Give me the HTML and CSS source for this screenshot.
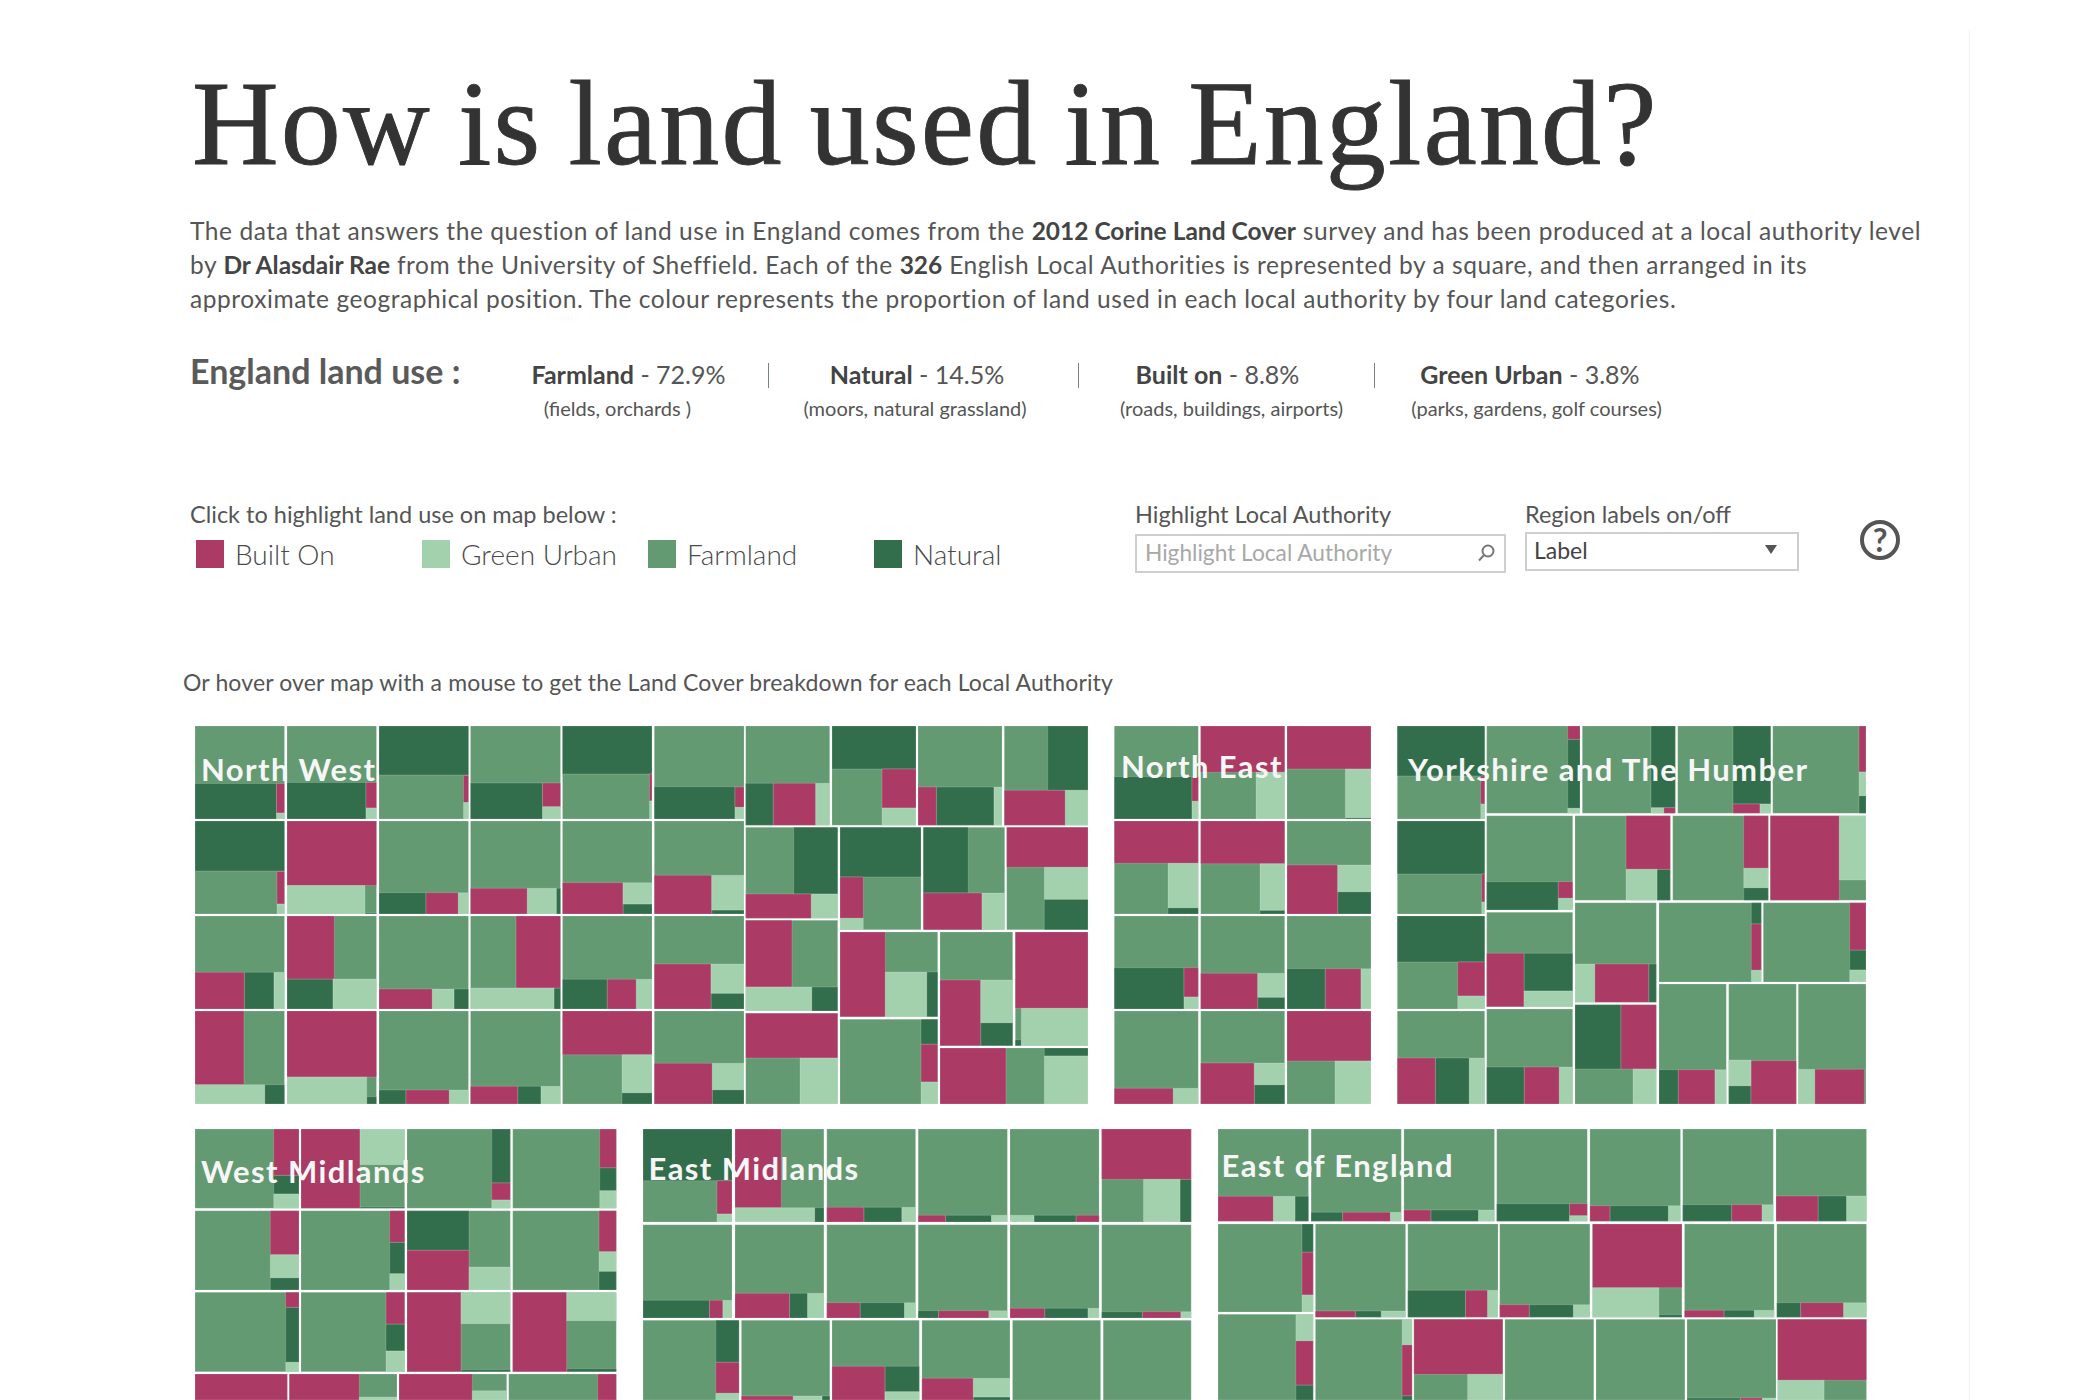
FILE: index.html
```html
<!DOCTYPE html>
<html lang="en">
<head>
<meta charset="utf-8">
<title>How is land used in England?</title>
<link rel="stylesheet" href="styles.css">
</head>
<body>
<main class="frame">
  <h1 class="title">How is land used in England?</h1>
  <p class="intro">The data that answers the question of land use in England comes from the <b>2012 Corine Land Cover</b> survey and has been produced at a local authority level<br>by <b>Dr Alasdair Rae</b> from the University of Sheffield. Each of the <b>326</b> English Local Authorities is represented by a square, and then arranged in its<br>approximate geographical position. The colour represents the proportion of land used in each local authority by four land categories.</p>

  <section class="stats">
    <h2 class="stats-head">England land use :</h2>
    <div class="stat stat-farm"><div class="stat-main"><b>Farmland</b> - 72.9%</div><div class="stat-sub">(fields, orchards )</div></div>
    <span class="rule rule-a"></span>
    <div class="stat stat-nat"><div class="stat-main"><b>Natural</b> - 14.5%</div><div class="stat-sub">(moors, natural grassland)</div></div>
    <span class="rule rule-b"></span>
    <div class="stat stat-built"><div class="stat-main"><b>Built on</b> - 8.8%</div><div class="stat-sub">(roads, buildings, airports)</div></div>
    <span class="rule rule-c"></span>
    <div class="stat stat-green"><div class="stat-main"><b>Green Urban</b> - 3.8%</div><div class="stat-sub">(parks, gardens, golf courses)</div></div>
  </section>

  <section class="controls">
    <div class="legend-col">
      <div class="ctl-label">Click to highlight land use on map below :</div>
      <div class="legend">
        <div class="legend-item"><span class="swatch sw-built"></span>Built On</div>
        <div class="legend-item"><span class="swatch sw-light"></span>Green Urban</div>
        <div class="legend-item"><span class="swatch sw-farm"></span>Farmland</div>
        <div class="legend-item"><span class="swatch sw-nat"></span>Natural</div>
      </div>
    </div>
    <div class="search-col">
      <div class="ctl-label">Highlight Local Authority</div>
      <div class="search-box">
        <span class="placeholder">Highlight Local Authority</span>
        <svg class="search-icon" viewBox="0 0 18 18" width="18" height="18"><circle cx="11" cy="7" r="5.5"/><path d="M7 11 2 16.5"/></svg>
      </div>
    </div>
    <div class="select-col">
      <div class="ctl-label">Region labels on/off</div>
      <div class="select-box"><span>Label</span><span class="caret"></span></div>
    </div>
    <svg class="help" viewBox="0 0 40 40" width="40" height="40"><circle cx="20" cy="20" r="18"/><text x="20" y="31.5" text-anchor="middle">?</text></svg>
  </section>

  <p class="hover-note">Or hover over map with a mouse to get the Land Cover breakdown for each Local Authority</p>

  <div class="map-row map-row-1">
    <div class="region">
      <svg class="treemap" viewBox="195 726 893 378" width="893" height="378">
        <path class="farm" d="M195 726H284.5V819H195zM287 726H376.5V819H287zM379 726H468.5V819H379zM470.5 726H560.5V819H470.5zM562.5 726H652V819H562.5zM654.3 726H744V819H654.3zM195 821H284.5V914H195zM287 821H376.5V914H287zM379 821H468.5V914H379zM470.5 821H560.5V914H470.5zM562.5 821H652V914H562.5zM654.3 821H744V914H654.3zM195 916H284.5V1009H195zM287 916H376.5V1009H287zM379 916H468.5V1009H379zM470.5 916H560.5V1009H470.5zM562.5 916H652V1009H562.5zM654.3 916H744V1009H654.3zM195 1011H284.5V1104H195zM287 1011H376.5V1104H287zM379 1011H468.5V1104H379zM470.5 1011H560.5V1104H470.5zM562.5 1011H652V1104H562.5zM654.3 1011H744V1104H654.3zM745.7 726H829.7V825.3H745.7zM832 726H916V825.3H832zM918 726H1002V825.3H918zM1004.3 726H1088V825.3H1004.3zM745.7 827.3H837.7V918.3H745.7zM840 827.3H921V929.7H840zM923.3 827.3H1004.7V929.7H923.3zM1006.7 827.3H1088V929.7H1006.7zM745.7 920.3H837.7V1011H745.7zM745.7 1013.3H837.7V1104H745.7zM840 932H937.7V1016.7H840zM840 1019.3H937.7V1104H840zM940 932H1012.7V1045.7H940zM1015.3 932H1088V1045.7H1015.3zM940 1048H1088V1104H940z"/>
        <path class="nat" d="M195 783.5H276.5V819H195zM287 782.5H366V819H287zM379 726H468.5V775H379zM470.5 783H542.5V819H470.5zM562.5 726H652V774H562.5zM654.3 786.7H735V819H654.3zM195 821H284.5V871H195zM365 913H376.5V914H365zM379 892.7H426V914H379zM556.3 888.3H560.5V914H556.3zM623 904H652V914H623zM711.7 910H744V914H711.7zM244.3 972.3H274V1009H244.3zM287 979H333V1009H287zM454 989H468.5V1009H454zM554 988H560.5V1009H554zM562.5 979.3H607.3V1009H562.5zM711 993.3H744V1009H711zM264.7 1084.7H284.5V1104H264.7zM366.7 1096.7H376.5V1104H366.7zM379 1090H406V1104H379zM517.7 1086.3H541V1104H517.7zM622 1092.7H652V1104H622zM712.3 1089.7H744V1104H712.3zM745.7 783.3H773.3V825.3H745.7zM832 726H916V769H832zM936.3 787H994V825.3H936.3zM1047.7 726H1088V790.3H1047.7zM793.7 827.3H837.7V894H793.7zM840 827.3H921V877H840zM923.3 827.3H968.3V893H923.3zM1044.3 899.3H1088V929.7H1044.3zM811.7 987H837.7V1011H811.7zM926.7 972H937.7V1016.7H926.7zM921 1019.3H937.7V1044.3H921zM980.7 1022.7H1012.7V1045.7H980.7zM1015.3 1039.7H1021.3V1045.7H1015.3zM1044.3 1048H1088V1056H1044.3z"/>
        <path class="built" d="M276.5 783.5H284.5V813H276.5zM366 782.5H376.5V808H366zM463.5 775.5H468.5V802.5H463.5zM542.5 783H560.5V806.7H542.5zM649.5 774H652V800.7H649.5zM735 787H744V807.3H735zM277 871.5H284.5V904H277zM287 821H376.5V885.5H287zM426 892.7H458.3V914H426zM470.5 888.3H527.3V914H470.5zM562.5 882.7H623V914H562.5zM654.3 875.3H711.7V914H654.3zM195 972.3H244.3V1009H195zM287 916H334.3V979H287zM379 989H432.3V1009H379zM516 916H560.5V988H516zM607.3 979.3H636.3V1009H607.3zM654.3 964H711V1009H654.3zM195 1011H244V1084.7H195zM287 1011H376.5V1077H287zM406 1090H449.3V1104H406zM470.5 1086.3H517.7V1104H470.5zM562.5 1011H652V1054.7H562.5zM654.3 1063.3H712.3V1104H654.3zM773.3 783.3H815.7V825.3H773.3zM882 769H916V808H882zM918 787H936.3V825.3H918zM1004.3 790.3H1065.3V825.3H1004.3zM745.7 894H811.3V918.3H745.7zM840 877H863.3V918.3H840zM923.3 893H982V929.7H923.3zM1006.7 827.3H1088V867.3H1006.7zM745.7 920.3H792V987H745.7zM745.7 1013.3H837.7V1058H745.7zM840 932H885.3V1016.7H840zM921 1044.3H937.7V1082H921zM940 980H980.7V1045.7H940zM1015.3 932H1088V1008.3H1015.3zM940 1048H1006V1104H940z"/>
        <path class="light" d="M276.5 813H284.5V819H276.5zM366 808H376.5V819H366zM463.5 802.5H468.5V819H463.5zM542.5 806.7H560.5V819H542.5zM649.5 801H652V819H649.5zM735 807.3H744V819H735zM277 904H284.5V914H277zM287 885.5H365V914H287zM458.3 892.7H468.5V914H458.3zM527.3 888.3H556.3V914H527.3zM623 882.7H652V904H623zM711.7 875.3H744V910H711.7zM274 972.3H284.5V1009H274zM333 979H376.5V1009H333zM432.3 989H454V1009H432.3zM470.5 988H554V1009H470.5zM636.3 979.3H652V1009H636.3zM711 964H744V993.3H711zM195 1084.7H264.7V1104H195zM287 1077H366.7V1104H287zM449.3 1090H468.5V1104H449.3zM541 1086.3H560.5V1104H541zM622 1054.7H652V1092.7H622zM712.3 1063.3H744V1089.7H712.3zM815.7 783.3H829.7V825.3H815.7zM882 808H916V825.3H882zM994 787H1002V825.3H994zM1065.3 790.3H1088V825.3H1065.3zM811.3 894H837.7V918.3H811.3zM840 918.3H863.3V929.7H840zM982 893H1004.7V929.7H982zM1044.3 867.3H1088V899.3H1044.3zM745.7 987H811.7V1011H745.7zM800 1058H837.7V1104H800zM885.3 972H926.7V1016.7H885.3zM921 1082H937.7V1104H921zM980.7 980H1012.7V1022.7H980.7zM1021.3 1008.3H1088V1045.7H1021.3zM1044.3 1056H1088V1104H1044.3z"/>
      </svg>
      <div class="region-label label-nw">North West</div>
    </div>
    <div class="region">
      <svg class="treemap" viewBox="1114 726 257 378" width="257" height="378">
        <path class="farm" d="M1114.3 726H1198.3V819H1114.3zM1200.7 726H1284.7V819H1200.7zM1287 726H1371V819H1287zM1114.3 821H1198.3V914H1114.3zM1200.7 821H1284.7V914H1200.7zM1287 821H1371V914H1287zM1114.3 916H1198.3V1009H1114.3zM1200.7 916H1284.7V1009H1200.7zM1287 916H1371V1009H1287zM1114.3 1011H1198.3V1104H1114.3zM1200.7 1011H1284.7V1104H1200.7zM1287 1011H1371V1104H1287z"/>
        <path class="nat" d="M1114.3 776.7H1192V819H1114.3zM1345.3 817.7H1371V819H1345.3zM1168 907.7H1198.3V914H1168zM1260 910.3H1284.7V914H1260zM1337.7 891.7H1371V914H1337.7zM1114.3 967.7H1184V1009H1114.3zM1257.7 997.3H1284.7V1009H1257.7zM1287 968.7H1325.3V1009H1287zM1254.3 1084.7H1284.7V1104H1254.3z"/>
        <path class="built" d="M1192 776.7H1198.3V801.3H1192zM1200.7 726H1284.7V772.3H1200.7zM1287 726H1371V769H1287zM1114.3 821H1198.3V863.3H1114.3zM1200.7 821H1284.7V863.7H1200.7zM1287 865H1337.7V914H1287zM1184 967.7H1198.3V997H1184zM1200.7 973.3H1257.7V1009H1200.7zM1325.3 968.7H1361V1009H1325.3zM1114.3 1088.3H1173.3V1104H1114.3zM1200.7 1063H1254.3V1104H1200.7zM1287 1011H1371V1061H1287z"/>
        <path class="light" d="M1192 801.3H1198.3V819H1192zM1256 772.3H1284.7V819H1256zM1345.3 769H1371V817.7H1345.3zM1168 863.3H1198.3V907.7H1168zM1260 863.7H1284.7V910.3H1260zM1337.7 865H1371V891.7H1337.7zM1184 997H1198.3V1009H1184zM1257.7 973.3H1284.7V997.3H1257.7zM1361 968.7H1371V1009H1361zM1173.3 1088.3H1198.3V1104H1173.3zM1254.3 1063H1284.7V1084.7H1254.3zM1335 1061H1371V1104H1335z"/>
      </svg>
      <div class="region-label label-ne">North East</div>
    </div>
    <div class="region">
      <svg class="treemap" viewBox="1397 726 469 378" width="469" height="378">
        <path class="farm" d="M1397.3 726H1484.7V819H1397.3zM1397.3 821H1484.7V914H1397.3zM1397.3 916H1484.7V1009H1397.3zM1397.3 1011H1484.7V1104H1397.3zM1486.7 726H1580V813.3H1486.7zM1582.3 726H1675.3V813.3H1582.3zM1677.7 726H1770.7V813.3H1677.7zM1772.7 726H1866V813.3H1772.7zM1486.7 815.7H1572.7V910H1486.7zM1486.7 912.3H1572.7V1006.7H1486.7zM1486.7 1009H1572.7V1104H1486.7zM1575 815.7H1670.3V900.3H1575zM1672.7 815.7H1768.3V900.3H1672.7zM1770.3 815.7H1866V900.3H1770.3zM1575 902.7H1656.3V1002.3H1575zM1575 1004.7H1656.3V1104H1575zM1659 902.7H1761.3V982H1659zM1763.3 902.7H1866V982H1763.3zM1659 984H1726.3V1104H1659zM1728.7 984H1796.3V1104H1728.7zM1798.3 984H1866V1104H1798.3z"/>
        <path class="nat" d="M1397.3 726H1484.7V776H1397.3zM1397.3 821H1484.7V874H1397.3zM1397.3 916H1484.7V962H1397.3zM1435.3 1058H1469.3V1104H1435.3zM1567.7 739.3H1580V808.3H1567.7zM1651 726H1675.3V807.7H1651zM1733 726H1770.7V804H1733zM1859 795.7H1866V813.3H1859zM1486.7 881.7H1558.3V910H1486.7zM1524 953.3H1572.7V991H1524zM1486.7 1067H1524.3V1104H1486.7zM1657 869.3H1670.3V900.3H1657zM1743.7 887.7H1768.3V900.3H1743.7zM1648.7 964H1656.3V1002.3H1648.7zM1575 1004.7H1621V1069H1575zM1751.3 902.7H1761.3V924H1751.3zM1849.7 950H1866V970H1849.7zM1659 1069.7H1678.3V1104H1659zM1728.7 1085.7H1751V1104H1728.7z"/>
        <path class="built" d="M1480.7 776H1484.7V804H1480.7zM1481.7 874H1484.7V902H1481.7zM1457.7 962H1484.7V996H1457.7zM1397.3 1058H1435.3V1104H1397.3zM1567.7 726H1580V739.3H1567.7zM1663.7 807.7H1675.3V813.3H1663.7zM1733 804H1760V813.3H1733zM1859 726H1866V772H1859zM1558.3 881.7H1572.7V898.3H1558.3zM1486.7 953.3H1524V1006.7H1486.7zM1524.3 1067H1559.3V1104H1524.3zM1626 815.7H1670.3V869.3H1626zM1743.7 815.7H1768.3V868.3H1743.7zM1770.3 815.7H1839.3V900.3H1770.3zM1594.7 964H1648.7V1002.3H1594.7zM1621 1004.7H1656.3V1069H1621zM1751.3 924H1761.3V970.3H1751.3zM1849.7 902.7H1866V950H1849.7zM1678.3 1069.7H1715V1104H1678.3zM1751 1060.7H1796.3V1104H1751zM1814.7 1069.3H1864.3V1104H1814.7z"/>
        <path class="light" d="M1480.7 804H1484.7V819H1480.7zM1481.7 902H1484.7V914H1481.7zM1457.7 996H1484.7V1009H1457.7zM1469.3 1058H1484.7V1104H1469.3zM1567.7 808.3H1580V813.3H1567.7zM1651 807.7H1663.7V813.3H1651zM1760 804H1770.7V813.3H1760zM1859 772H1866V795.7H1859zM1558.3 898.3H1572.7V910H1558.3zM1524 991H1572.7V1006.7H1524zM1559.3 1067H1572.7V1104H1559.3zM1626 869.3H1657V900.3H1626zM1743.7 868.3H1768.3V887.7H1743.7zM1839.3 815.7H1866V880H1839.3zM1575 964H1594.7V1002.3H1575zM1633 1069H1656.3V1104H1633zM1751.3 970.3H1761.3V982H1751.3zM1849.7 970H1866V982H1849.7zM1715 1069.7H1726.3V1104H1715zM1728.7 1060H1751V1085.7H1728.7zM1798.3 1069.3H1814.7V1104H1798.3z"/>
      </svg>
      <div class="region-label label-yh">Yorkshire and The Humber</div>
    </div>
  </div>

  <div class="map-row map-row-2">
    <div class="region">
      <svg class="treemap" viewBox="195 1129 421.5 271" width="421.5" height="271">
        <path class="farm" d="M195 1129H299V1208.3H195zM301 1129H404.7V1208.3H301zM407 1129H510.3V1208.3H407zM512.7 1129H616.3V1208.3H512.7zM195 1210.7H299V1290H195zM301 1210.7H404.7V1290H301zM407 1210.7H510.3V1290H407zM512.7 1210.7H616.3V1290H512.7zM195 1292.3H299V1371.7H195zM301 1292.3H404.7V1371.7H301zM407 1292.3H510.3V1371.7H407zM512.7 1292.3H616.3V1371.7H512.7zM195 1374H287.3V1400H195zM289.3 1374H397V1400H289.3zM399 1374H506.7V1400H399zM508.7 1374H616.3V1400H508.7z"/>
        <path class="nat" d="M273.7 1175.3H299V1194H273.7zM360 1207H404.7V1208.3H360zM491.7 1129H510.3V1183H491.7zM599.7 1167.7H616.3V1190.7H599.7zM270.3 1277.7H299V1290H270.3zM389.7 1242.3H404.7V1273.7H389.7zM407 1210.7H469V1250.3H407zM599 1271.3H616.3V1290H599zM285.7 1307.3H299V1362.3H285.7zM386 1324H404.7V1351H386zM461 1369.7H510.3V1371.7H461zM566.7 1368.7H616.3V1371.7H566.7z"/>
        <path class="built" d="M273.7 1129H299V1175.3H273.7zM301 1129H360V1208.3H301zM491.7 1183H510.3V1200H491.7zM599.7 1129H616.3V1167.7H599.7zM270.3 1210.7H299V1254.7H270.3zM389.7 1210.7H404.7V1242.3H389.7zM407 1250.3H469V1290H407zM599 1210.7H616.3V1251.7H599zM285.7 1292.3H299V1307.3H285.7zM386 1292.3H404.7V1324H386zM407 1292.3H461V1371.7H407zM512.7 1292.3H566.7V1371.7H512.7zM195 1374H287.3V1400H195zM289.3 1374H359.3V1400H289.3zM399 1374H472.3V1400H399zM597.7 1374H616.3V1400H597.7z"/>
        <path class="light" d="M273.7 1194H299V1208.3H273.7zM360 1129H404.7V1164.7H360zM491.7 1200H510.3V1208.3H491.7zM599.7 1190.7H616.3V1208.3H599.7zM270.3 1254.7H299V1277.7H270.3zM389.7 1273.7H404.7V1290H389.7zM469 1267H510.3V1290H469zM599 1251.7H616.3V1271.3H599zM285.7 1362.3H299V1371.7H285.7zM386 1351H404.7V1371.7H386zM461 1292.3H510.3V1323.7H461zM566.7 1292.3H616.3V1320.7H566.7zM359.3 1397H397V1400H359.3zM472.3 1390.7H506.7V1400H472.3z"/>
      </svg>
      <div class="region-label label-wm">West Midlands</div>
    </div>
    <div class="region">
      <svg class="treemap" viewBox="643 1129 548.5 271" width="548.5" height="271">
        <path class="farm" d="M643 1129H732V1222H643zM735 1129H823.9V1222H735zM826.8 1129H915.6V1222H826.8zM918.2 1129H1007.4V1222H918.2zM1010 1129H1099.1V1222H1010zM1101.7 1129H1191.2V1222H1101.7zM643 1224.7H732V1318H643zM735 1224.7H823.9V1318H735zM826.8 1224.7H915.6V1318H826.8zM918.2 1224.7H1007.4V1318H918.2zM1010 1224.7H1099.1V1318H1010zM1101.7 1224.7H1191.2V1318H1101.7zM643 1320.3H739.1V1400H643zM741.4 1320.3H829.8V1400H741.4zM832 1320.3H919.3V1400H832zM921.9 1320.3H1010V1400H921.9zM1012.5 1320.3H1100.6V1400H1012.5zM1103.2 1320.3H1191.2V1400H1103.2z"/>
        <path class="nat" d="M643 1129H732V1180.7H643zM814.6 1207.7H823.9V1222H814.6zM863.8 1207.3H901.9V1222H863.8zM945.6 1215.3H991.5V1222H945.6zM1034 1215.3H1076.2V1222H1034zM1180 1179.3H1191.2V1222H1180zM643 1300.3H709.5V1318H643zM789.5 1293.3H807.6V1318H789.5zM860.1 1302.7H904.5V1318H860.1zM918.2 1310.7H938.5V1318H918.2zM1044.7 1308.3H1088V1318H1044.7zM1101.7 1311.7H1142.4V1318H1101.7zM715.8 1320.3H739.1V1362.3H715.8zM822 1396H829.8V1400H822zM884.9 1366.3H919.3V1391.7H884.9zM973.3 1397H1010V1400H973.3z"/>
        <path class="built" d="M717 1180.7H732V1214H717zM735 1129H781.3V1207.7H735zM826.8 1207.3H863.8V1222H826.8zM918.2 1215.3H945.6V1222H918.2zM1076.2 1215.3H1099.1V1222H1076.2zM1101.7 1129H1191.2V1179.3H1101.7zM709.5 1300.3H722.9V1318H709.5zM735 1293.3H789.5V1318H735zM826.8 1302.7H860.1V1318H826.8zM938.5 1310.7H988.9V1318H938.5zM1010 1308.3H1044.7V1318H1010zM1142.4 1311.7H1180.9V1318H1142.4zM715.8 1362.3H739.1V1393.3H715.8zM741.4 1396H793.2V1400H741.4zM832 1366.3H884.9V1400H832zM921.9 1378.3H973.3V1400H921.9z"/>
        <path class="light" d="M717 1214H732V1222H717zM735 1207.7H814.6V1222H735zM901.9 1207.3H915.6V1222H901.9zM991.5 1215.3H1007.4V1222H991.5zM1010 1215.3H1034V1222H1010zM1143.5 1179.3H1180V1222H1143.5zM722.9 1300.3H732V1318H722.9zM807.6 1293.3H823.9V1318H807.6zM904.5 1302.7H915.6V1318H904.5zM988.9 1310.7H1007.4V1318H988.9zM1088 1308.3H1099.1V1318H1088zM1180.9 1311.7H1191.2V1318H1180.9zM715.8 1393.3H739.1V1400H715.8zM793.2 1396H822V1400H793.2zM884.9 1391.7H919.3V1400H884.9zM973.3 1378.3H1010V1397H973.3z"/>
      </svg>
      <div class="region-label label-em">East Midlands</div>
    </div>
    <div class="region">
      <svg class="treemap" viewBox="1217.5 1129 648.5 271" width="648.5" height="271">
        <path class="farm" d="M1217.5 1129H1308V1221.3H1217.5zM1310.6 1129H1400.8V1221.3H1310.6zM1403.4 1129H1494V1221.3H1403.4zM1496.2 1129H1586.8V1221.3H1496.2zM1589.4 1129H1680V1221.3H1589.4zM1682.2 1129H1772.8V1221.3H1682.2zM1775.5 1129H1866V1221.3H1775.5zM1217.5 1224H1312.7V1312H1217.5zM1314.9 1224H1405.1V1317.3H1314.9zM1407.3 1224H1497.5V1317.3H1407.3zM1499.2 1224H1589.4V1317.3H1499.2zM1592 1224H1681.4V1317.3H1592zM1684 1224H1773.7V1317.3H1684zM1776.3 1224H1866V1317.3H1776.3zM1217.5 1314.3H1312.7V1400H1217.5zM1314.9 1319.3H1411.6V1400H1314.9zM1413.4 1319.3H1502.3V1400H1413.4zM1504.4 1319.3H1593.3V1400H1504.4zM1595.5 1319.3H1684.4V1400H1595.5zM1686.5 1319.3H1775.5V1400H1686.5zM1777.2 1319.3H1866V1400H1777.2z"/>
        <path class="nat" d="M1294.5 1196.3H1308V1221.3H1294.5zM1310.6 1212.3H1342.2V1221.3H1310.6zM1430.3 1210H1478V1221.3H1430.3zM1496.2 1203.7H1569V1221.3H1496.2zM1609.4 1205.7H1667.9V1221.3H1609.4zM1682.2 1204.7H1731.2V1221.3H1682.2zM1817.5 1196H1846.1V1221.3H1817.5zM1301.5 1224H1312.7V1252.3H1301.5zM1354.8 1311H1380.8V1317.3H1354.8zM1407.3 1290.3H1465V1317.3H1407.3zM1528.7 1304.7H1572.9V1317.3H1528.7zM1658.4 1314.7H1681.4V1317.3H1658.4zM1723.4 1310.3H1753.8V1317.3H1723.4zM1776.3 1302.7H1800.2V1317.3H1776.3zM1295.4 1385H1312.7V1400H1295.4zM1401.6 1395.7H1411.6V1400H1401.6zM1686.5 1398H1739.9V1400H1686.5z"/>
        <path class="built" d="M1217.5 1196.3H1272.9V1221.3H1217.5zM1342.2 1212.3H1389.9V1221.3H1342.2zM1403.4 1210H1430.3V1221.3H1403.4zM1569 1203.7H1586.8V1215.7H1569zM1589.4 1205.7H1609.4V1221.3H1589.4zM1731.2 1204.7H1761.6V1221.3H1731.2zM1775.5 1196H1817.5V1221.3H1775.5zM1301.5 1252.3H1312.7V1295H1301.5zM1314.9 1311H1354.8V1317.3H1314.9zM1465 1290.3H1487.1V1317.3H1465zM1499.2 1304.7H1528.7V1317.3H1499.2zM1592 1224H1681.4V1287.7H1592zM1684 1310.3H1723.4V1317.3H1684zM1800.2 1302.7H1843.1V1317.3H1800.2zM1295.4 1340.7H1312.7V1385H1295.4zM1401.6 1344.7H1411.6V1395.7H1401.6zM1413.4 1319.3H1502.3V1374.3H1413.4zM1739.9 1398H1762V1400H1739.9zM1777.2 1319.3H1866V1380.3H1777.2z"/>
        <path class="light" d="M1272.9 1196.3H1294.5V1221.3H1272.9zM1389.9 1212.3H1400.8V1221.3H1389.9zM1478 1210H1494V1221.3H1478zM1569 1215.7H1586.8V1221.3H1569zM1667.9 1205.7H1680V1221.3H1667.9zM1761.6 1204.7H1772.8V1221.3H1761.6zM1846.1 1196H1866V1221.3H1846.1zM1301.5 1295H1312.7V1312H1301.5zM1380.8 1311H1405.1V1317.3H1380.8zM1487.1 1290.3H1497.5V1317.3H1487.1zM1572.9 1304.7H1589.4V1317.3H1572.9zM1592 1287.7H1658.4V1317.3H1592zM1753.8 1310.3H1773.7V1317.3H1753.8zM1843.1 1302.7H1866V1317.3H1843.1zM1295.4 1314.3H1312.7V1340.7H1295.4zM1401.6 1319.3H1411.6V1344.7H1401.6zM1467.1 1374.3H1502.3V1400H1467.1zM1762 1398H1775.5V1400H1762zM1777.2 1380.3H1823.6V1400H1777.2z"/>
      </svg>
      <div class="region-label label-ee">East of England</div>
    </div>
  </div>
</main>
</body>
</html>
```
FILE: styles.css
```css
html, body {
  margin: 0;
  height: 1400px;
  overflow: hidden;
  background: #fff;
}

body {
  font-family: Lato, "Open Sans", sans-serif;
  color: #555;
}

.frame {
  box-sizing: border-box;
  width: 1970px;
  height: 1371px;
  margin-top: 29px;
  padding-left: 190px;
  border-right: 1px solid #f2f2f2;
  overflow: hidden;
}

.title {
  margin: 30px 0 0 2px;
  font-family: "Liberation Serif", serif;
  font-size: 120px;
  font-weight: 400;
  line-height: 130px;
  letter-spacing: 2.15px;
  word-spacing: -6px;
  -webkit-text-stroke: .9px #333;
  color: #333;
  white-space: nowrap;
}

.intro {
  margin: 25px 0 0;
  font-size: 24.5px;
  line-height: 34px;
  letter-spacing: .57px;
  white-space: nowrap;
}

.intro b {
  letter-spacing: 0;
}

.intro b, .stat-main b {
  color: #444;
  font-weight: 700;
}

.stats {
  display: flex;
  align-items: flex-start;
  margin-top: 41px;
}

.stats-head {
  width: 341px;
  margin: -5px 0 0;
  font-size: 34px;
  font-weight: 700;
  line-height: 38px;
  color: #5a5a5a;
  white-space: nowrap;
}

.stat {
  text-align: center;
  white-space: nowrap;
}

.stat-main {
  font-size: 25px;
  line-height: 34px;
}

.stat-sub {
  margin-top: 3px;
  font-size: 20px;
  line-height: 28px;
}

.stat-farm { width: 195px; }
.stat-farm .stat-sub { margin-right: 22px; }
.stat-nat { width: 226px; }
.stat-nat .stat-main { margin-left: 4px; }
.stat-built { width: 227px; }
.stat-built .stat-main { margin-right: 28px; }
.stat-green { width: 251px; }
.stat-green .stat-main { margin-right: 13px; }

.rule {
  flex: none;
  width: 1px;
  height: 25px;
  margin-top: 6px;
  background: #7f8078;
}

.rule-a { margin-left: 42px; margin-right: 33px; background: #6b8296; }
.rule-b { margin-left: 50px; margin-right: 39px; }
.rule-c { margin-left: 29px; margin-right: 36px; }

.controls {
  display: flex;
  align-items: flex-start;
  margin-top: 78px;
}

.ctl-label {
  font-size: 23.5px;
  line-height: 28px;
  white-space: nowrap;
}

.legend-col { width: 945px; }

.legend {
  display: flex;
  margin: 12px 0 0 6px;
}

.legend-item {
  display: flex;
  align-items: center;
  gap: 11px;
  width: 226px;
  font-size: 28px;
  font-weight: 300;
  line-height: 28px;
  color: #4a4a4a;
}

.swatch {
  flex: none;
  width: 28px;
  height: 28px;
}

.sw-built { background: #ab3a65; }
.sw-light { background: #a3d1ae; }
.sw-farm { background: #639a72; }
.sw-nat { background: #326e4b; }

.search-col { width: 390px; }

.search-box {
  display: flex;
  align-items: center;
  justify-content: space-between;
  box-sizing: border-box;
  width: 371px;
  height: 39px;
  margin-top: 6px;
  padding: 0 9px 2px 8px;
  border: 2px solid #cfcfcf;
}

.placeholder {
  font-size: 22.7px;
  color: #a8a8a8;
  white-space: nowrap;
}

.search-icon {
  fill: none;
  stroke: #777;
  stroke-width: 2;
}

.select-col { width: 335px; }

.select-box {
  display: flex;
  align-items: center;
  justify-content: space-between;
  box-sizing: border-box;
  width: 274px;
  height: 39px;
  margin-top: 4px;
  padding: 0 20px 3px 7px;
  border: 2px solid #cfcfcf;
  font-size: 23px;
  color: #444;
}

.caret {
  width: 0;
  height: 0;
  margin-top: -2px;
  border-left: 6px solid transparent;
  border-right: 6px solid transparent;
  border-top: 9px solid #555;
}

.help {
  flex: none;
  margin-top: 20px;
}

.help circle {
  fill: #fff;
  stroke: #555;
  stroke-width: 4;
}

.help text {
  font-family: Lato, sans-serif;
  font-size: 32px;
  font-weight: 700;
  fill: #555;
}

.hover-note {
  margin: 95px 0 0 -7px;
  font-size: 23px;
  line-height: 28px;
  letter-spacing: .14px;
  white-space: nowrap;
}

.map-row {
  display: flex;
  margin-left: 5px;
}

.map-row-1 {
  gap: 26px;
  margin-top: 30px;
}

.map-row-2 {
  gap: 26.5px;
  margin-top: 25px;
}

.region {
  position: relative;
  line-height: 0;
}

.treemap {
  display: block;
}

.treemap path {
  stroke: #fff;
  stroke-opacity: .25;
  stroke-width: .7;
}

.farm { fill: #639a72; }
.nat { fill: #326e4b; }
.built { fill: #ab3a65; }
.light { fill: #a3d1ae; }

.region-label {
  position: absolute;
  font-size: 31px;
  font-weight: 700;
  line-height: 36px;
  letter-spacing: 1.4px;
  color: #f6f6f6;
  white-space: nowrap;
}

.label-nw { left: 6px; top: 25px; }
.label-ne { left: 7px; top: 22px; }
.label-yh { left: 11px; top: 25px; }
.label-wm { left: 6px; top: 24px; }
.label-em { left: 5.5px; top: 21px; }
.label-ee { left: 3.5px; top: 18px; }
```
